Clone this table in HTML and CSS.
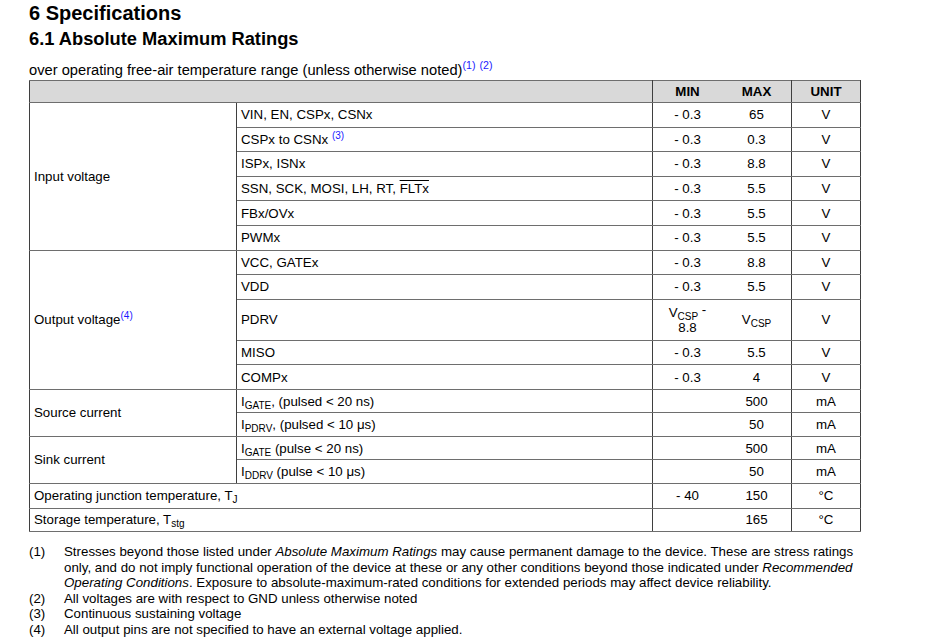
FILE: index.html
```html
<!DOCTYPE html>
<html lang="en">
<head>
<meta charset="utf-8">
<title>6 Specifications</title>
<link rel="stylesheet" href="styles.css">
</head>
<body>
<div class="page">
  <h1 class="h1">6 Specifications</h1>
  <h2 class="h2">6.1 Absolute Maximum Ratings</h2>
  <p class="intro">over operating free-air temperature range (unless otherwise noted)<sup class="ref big">(1)</sup> <sup class="ref big">(2)</sup></p>
  <table class="spec">
    <colgroup>
      <col class="c-label">
      <col class="c-param">
      <col class="c-num">
      <col class="c-num">
      <col class="c-unit">
    </colgroup>
    <thead>
      <tr class="hdr">
        <th colspan="2"></th>
        <th class="min">MIN</th>
        <th class="max">MAX</th>
        <th class="unit">UNIT</th>
      </tr>
    </thead>
    <tbody>
      <tr>
        <td rowspan="6" class="label">Input voltage</td>
        <td class="param">VIN, EN, CSPx, CSNx</td>
        <td class="min">- 0.3</td><td class="max">65</td><td class="unit">V</td>
      </tr>
      <tr>
        <td class="param">CSPx to CSNx <sup class="ref">(3)</sup></td>
        <td class="min">- 0.3</td><td class="max">0.3</td><td class="unit">V</td>
      </tr>
      <tr>
        <td class="param">ISPx, ISNx</td>
        <td class="min">- 0.3</td><td class="max">8.8</td><td class="unit">V</td>
      </tr>
      <tr>
        <td class="param">SSN, SCK, MOSI, LH, RT, <span class="over">FLTx</span></td>
        <td class="min">- 0.3</td><td class="max">5.5</td><td class="unit">V</td>
      </tr>
      <tr>
        <td class="param">FBx/OVx</td>
        <td class="min">- 0.3</td><td class="max">5.5</td><td class="unit">V</td>
      </tr>
      <tr>
        <td class="param">PWMx</td>
        <td class="min">- 0.3</td><td class="max">5.5</td><td class="unit">V</td>
      </tr>
      <tr>
        <td rowspan="5" class="label">Output voltage<sup class="ref">(4)</sup></td>
        <td class="param">VCC, GATEx</td>
        <td class="min">- 0.3</td><td class="max">8.8</td><td class="unit">V</td>
      </tr>
      <tr>
        <td class="param">VDD</td>
        <td class="min">- 0.3</td><td class="max">5.5</td><td class="unit">V</td>
      </tr>
      <tr class="tall">
        <td class="param">PDRV</td>
        <td class="min two">V<sub>CSP</sub> <span class="dash">-</span><br>8.8</td><td class="max">V<sub>CSP</sub></td><td class="unit">V</td>
      </tr>
      <tr>
        <td class="param">MISO</td>
        <td class="min">- 0.3</td><td class="max">5.5</td><td class="unit">V</td>
      </tr>
      <tr>
        <td class="param">COMPx</td>
        <td class="min">- 0.3</td><td class="max">4</td><td class="unit">V</td>
      </tr>
      <tr class="tight">
        <td rowspan="2" class="label">Source current</td>
        <td class="param">I<sub>GATE</sub>, (pulsed &lt; 20 ns)</td>
        <td class="min"></td><td class="max">500</td><td class="unit">mA</td>
      </tr>
      <tr class="tight">
        <td class="param">I<sub>PDRV</sub>, (pulsed &lt; 10 μs)</td>
        <td class="min"></td><td class="max">50</td><td class="unit">mA</td>
      </tr>
      <tr class="tight">
        <td rowspan="2" class="label">Sink current</td>
        <td class="param">I<sub>GATE</sub> (pulse &lt; 20 ns)</td>
        <td class="min"></td><td class="max">500</td><td class="unit">mA</td>
      </tr>
      <tr class="tight">
        <td class="param">I<sub>DDRV</sub> (pulse &lt; 10 μs)</td>
        <td class="min"></td><td class="max">50</td><td class="unit">mA</td>
      </tr>
      <tr>
        <td colspan="2" class="label">Operating junction temperature, T<sub>J</sub></td>
        <td class="min">- 40</td><td class="max">150</td><td class="unit">°C</td>
      </tr>
      <tr class="tight">
        <td colspan="2" class="label">Storage temperature, T<sub>stg</sub></td>
        <td class="min"></td><td class="max">165</td><td class="unit">°C</td>
      </tr>
    </tbody>
  </table>
  <ol class="notes">
    <li><span class="num">(1)</span><span class="txt">Stresses beyond those listed under <i>Absolute Maximum Ratings</i> may cause permanent damage to the device. These are stress ratings only, and do not imply functional operation of the device at these or any other conditions beyond those indicated under <i>Recommended Operating Conditions</i>. Exposure to absolute-maximum-rated conditions for extended periods may affect device reliability.</span></li>
    <li><span class="num">(2)</span><span class="txt">All voltages are with respect to GND unless otherwise noted</span></li>
    <li><span class="num">(3)</span><span class="txt">Continuous sustaining voltage</span></li>
    <li><span class="num">(4)</span><span class="txt">All output pins are not specified to have an external voltage applied.</span></li>
  </ol>
</div>
</body>
</html>
```
FILE: styles.css
```css
html, body {
  margin: 0;
  padding: 0;
  background: #ffffff;
}

.page {
  padding: 2px 0 0 29px;
  font-family: "Liberation Sans", Arial, sans-serif;
  color: #000000;
}

.h1 {
  margin: 0;
  font-size: 20px;
  line-height: 23px;
  font-weight: bold;
}

.h2 {
  margin: 3px 0 0 0;
  font-size: 18.3px;
  line-height: 22px;
  font-weight: bold;
}

.intro {
  margin: 12px 0 0 0;
  font-size: 14.7px;
  line-height: 17px;
}

.ref {
  color: #1a1aff;
  font-size: 10px;
  line-height: 0;
  vertical-align: 5px;
}

.ref.big {
  font-size: 10.6px;
  vertical-align: 6px;
}

.spec {
  border-collapse: collapse;
  width: 831px;
  margin-top: 1px;
  font-size: 13.3px;
  line-height: 15px;
  table-layout: fixed;
}

.c-label { width: 207px; }
.c-param { width: 416px; }
.c-num { width: 69.5px; }
.c-unit { width: 69px; }

.spec th,
.spec td {
  padding: 0 4px;
  vertical-align: middle;
  border-top: 1px solid #6e6e6e;
  border-bottom: 1px solid #6e6e6e;
  border-left: 1px solid #3f3f3f;
  border-right: 1px solid #3f3f3f;
}

.spec tr { height: 24.6px; }
.spec tr.tight { height: 23.5px; }
.spec tr.tall { height: 41px; }
.spec tr.hdr { height: 22px; }

.spec th {
  background: #d9d9d9;
  font-weight: bold;
}

.spec .min { text-align: center; border-right: none; }
.spec .max { text-align: center; border-left: none; }
.spec .unit { text-align: center; }
.spec .label,
.spec .param { text-align: left; }

.spec sub {
  font-size: 10px;
  line-height: 0;
  vertical-align: -3px;
}

.dash {
  position: relative;
  top: -3px;
}

.over { text-decoration: overline; }

.notes {
  list-style: none;
  margin: 12px 0 0 0;
  padding: 0;
  font-size: 13.3px;
  line-height: 15.5px;
}

.notes li {
  display: grid;
  grid-template-columns: 35px 796px;
}
```
